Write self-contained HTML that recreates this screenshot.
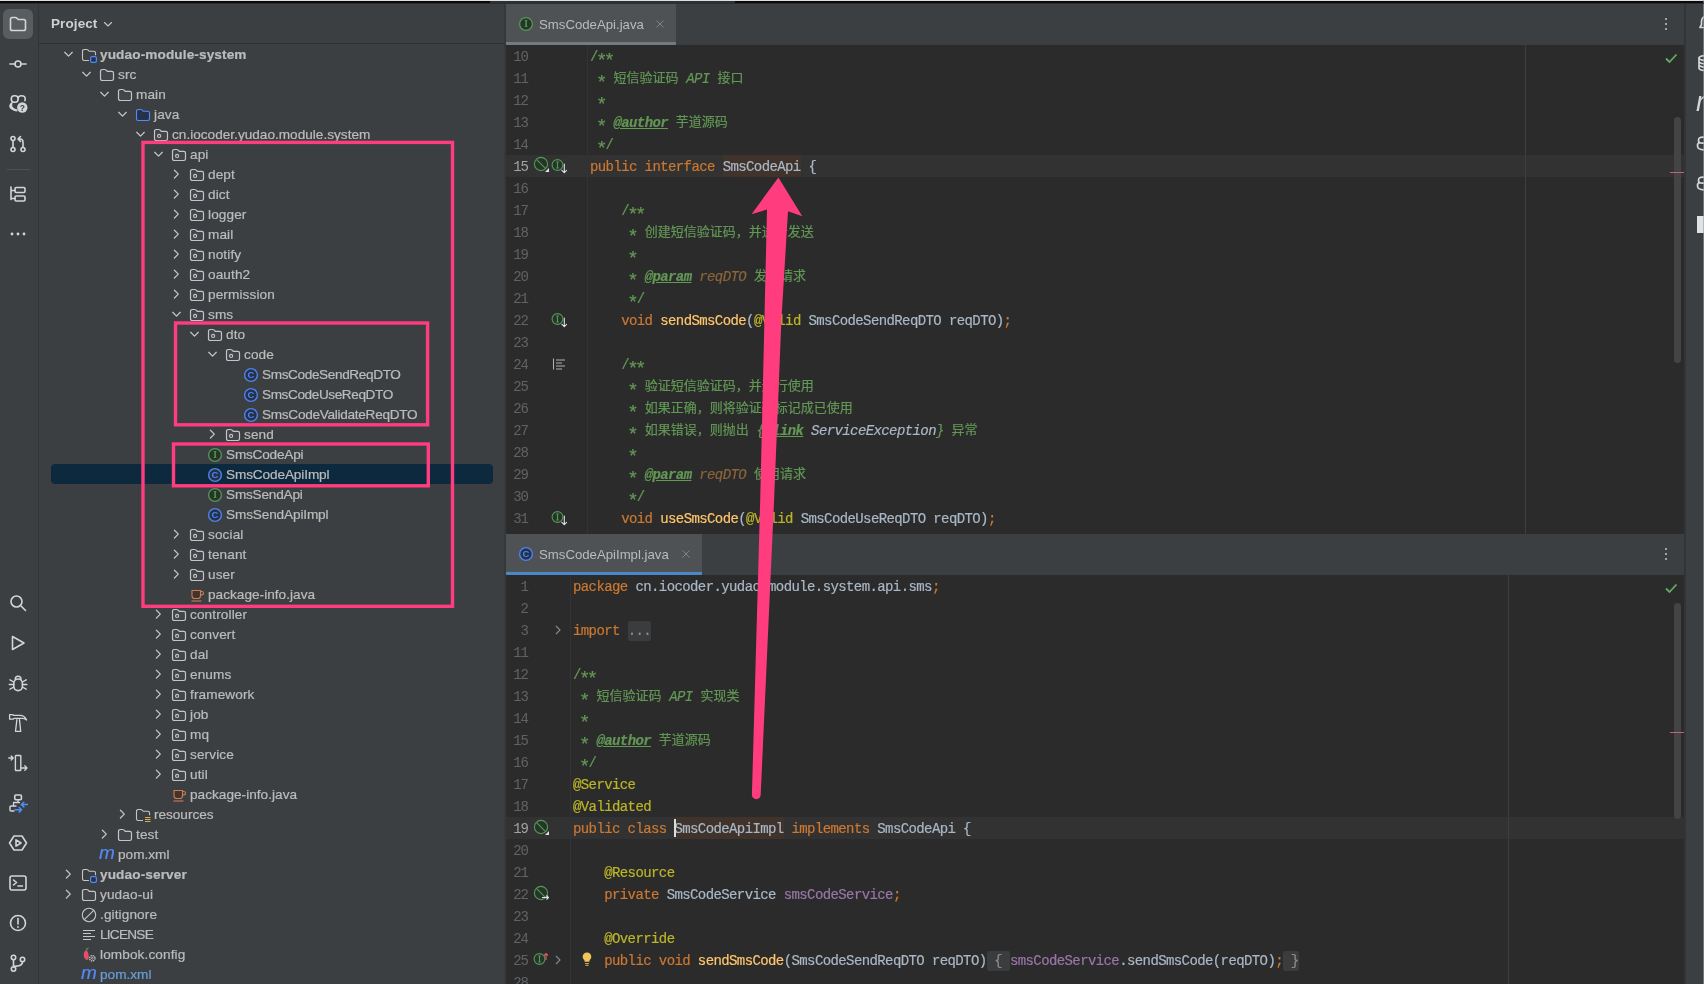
<!DOCTYPE html><html><head><meta charset="utf-8"><title>IDE</title><style>
*{box-sizing:border-box}
html,body{margin:0;padding:0}
body{width:1704px;height:984px;overflow:hidden;background:#3c3f41;position:relative;font-family:"Liberation Sans","Noto Sans CJK SC",sans-serif;color:#bbbbbb}
div{position:absolute}
#root{left:0;top:0;width:1704px;height:984px;will-change:transform}
.ti{width:16px;height:16px;line-height:0}
.tl{height:20px;line-height:20px;font-size:13.6px;color:#bbbbbb;-webkit-text-stroke:.22px;white-space:nowrap;letter-spacing:.12px;margin-top:1px}
.sel{left:51px;width:442px;height:20px;background:#0d293e;border-radius:4px}
.ed{background:#2b2b2b;overflow:hidden}
.ln{left:0;height:22px;text-align:right;font:14px/22px "Liberation Mono","Noto Sans CJK SC",monospace;letter-spacing:-1.3px;color:#606366}
.ln.cur{color:#a4a3a3}
.cl{height:22px;white-space:pre;font:14px/22px "Liberation Mono","Noto Sans CJK SC",monospace;letter-spacing:-.6px;color:#a9b7c6;-webkit-text-stroke:.2px}
.cj{font-size:13px;letter-spacing:0;position:relative;top:-.6px}
.as{display:inline-block;width:7.8px;height:10px;font-size:19px;line-height:10px;letter-spacing:0;position:relative;top:4.5px;text-indent:-1.8px;font-style:normal;overflow:visible}
.k{color:#cc7832}.d{color:#629755}.d i{font-style:italic}
.dt{color:#629755;font-weight:bold;font-style:italic;text-decoration:underline}
.dp{color:#8a653b;font-style:italic}.di{color:#a9b7c6;font-style:italic}
.a{color:#bbb529}.f{color:#ffc66d}.v{color:#9876aa}
.hl{background:#40332b;display:inline-block;height:21.5px;vertical-align:top;margin-top:-1px;padding-top:1px;box-sizing:border-box}
.fold{background:#3a3c3d;color:#8c8c8c;border-radius:2px;display:inline-block;height:20px;line-height:20px;vertical-align:top;margin-top:1px}
.tab{font-size:13.2px;color:#bbbbbb;white-space:nowrap;letter-spacing:0}
.pk{border:3px solid #ff3c7e}
</style></head><body><div id="root">
<div style="left:0;top:0;width:1704px;height:1.1px;background:#dedede"></div>
<div style="left:0;top:1.1px;width:1704px;height:1.6px;background:#0a0a0b"></div>
<div style="left:490px;top:1.1px;width:245px;height:1.6px;background:#2e3032"></div>
<div style="left:38px;top:3px;width:1px;height:981px;background:#323436"></div>
<div style="left:3px;top:9px;width:30px;height:30px;border-radius:6px;background:#5a5d60"></div>
<div style="left:8px;top:14px;width:20px;height:20px;line-height:0"><svg width="20" height="20" viewBox="0 0 20 20" fill="none" stroke="#d3d5d9" stroke-width="1.6" stroke-linecap="round" stroke-linejoin="round"><path d="M2.5 5.3c0-1 .8-1.8 1.8-1.8h3.1c.5 0 .9.2 1.3.5l1.5 1.5h5.5c1 0 1.8.8 1.8 1.8v7.4c0 1-.8 1.8-1.8 1.8H4.3c-1 0-1.8-.8-1.8-1.8z"/></svg></div>
<div style="left:8px;top:54px;width:20px;height:20px;line-height:0"><svg width="20" height="20" viewBox="0 0 20 20" fill="none" stroke="#d3d5d9" stroke-width="1.6" stroke-linecap="round" stroke-linejoin="round"><circle cx="10" cy="10" r="3"/><path d="M2 10h5M13 10h5"/></svg></div>
<div style="left:8px;top:94px;width:20px;height:20px;line-height:0"><svg width="20" height="20" viewBox="0 0 20 20" fill="none" stroke="#d3d5d9" stroke-width="1.6" stroke-linecap="round" stroke-linejoin="round"><rect x="3.300" y="1.800" width="6.800" height="6.400" rx="3"/><path d="M10.100 4.800c0-2 1.400-3 3.500-3 2.200 0 3.600 1.200 3.600 3.200 0 .6-.1 1.100-.3 1.600"/><path d="M4.300 7.800C1.200 9.800.4 12.400 2 14.200c1.700 1.800 4.800 3 7.300 3.400l.2-2c-2-.5-4.300-1.600-5-2.800-.5-1.200-.2-3.200.3-4.600z" fill="#d3d5d9" stroke="none"/><circle cx="14.300" cy="13.500" r="5.200" fill="#d3d5d9" stroke="none"/><text x="14.300" y="16.600" font-family="Liberation Sans,sans-serif" font-weight="bold" font-size="8.500" text-anchor="middle" fill="#3c3f41" stroke="none">?</text></svg></div>
<div style="left:8px;top:134px;width:20px;height:20px;line-height:0"><svg width="20" height="20" viewBox="0 0 20 20" fill="none" stroke="#d3d5d9" stroke-width="1.6" stroke-linecap="round" stroke-linejoin="round"><circle cx="5" cy="4.500" r="2"/><circle cx="5" cy="15.500" r="2"/><circle cx="15" cy="15.500" r="2"/><path d="M5 6.500v7M15 13.500V8c0-1.700-1.300-3-3-3h-1.500M12.500 2.500L10 5l2.500 2.500"/></svg></div>
<div style="left:7px;top:169px;width:23px;height:1px;background:#4e5157"></div>
<div style="left:8px;top:184px;width:20px;height:20px;line-height:0"><svg width="20" height="20" viewBox="0 0 20 20" fill="none" stroke="#d3d5d9" stroke-width="1.6" stroke-linecap="round" stroke-linejoin="round"><path d="M3 3v12.500M3 6.500h4M3 14.500h4"/><rect x="7" y="3.500" width="10" height="5" rx="1.200"/><rect x="7" y="12" width="10" height="5" rx="1.200"/></svg></div>
<div style="left:8px;top:224px;width:20px;height:20px;line-height:0"><svg width="20" height="20" viewBox="0 0 20 20" fill="none" stroke="#d3d5d9" stroke-width="1.6" stroke-linecap="round" stroke-linejoin="round"><circle cx="4" cy="10" r="1.400" fill="#d3d5d9" stroke="none"/><circle cx="10" cy="10" r="1.400" fill="#d3d5d9" stroke="none"/><circle cx="16" cy="10" r="1.400" fill="#d3d5d9" stroke="none"/></svg></div>
<div style="left:8px;top:593px;width:20px;height:20px;line-height:0"><svg width="20" height="20" viewBox="0 0 20 20" fill="none" stroke="#d3d5d9" stroke-width="1.6" stroke-linecap="round" stroke-linejoin="round"><circle cx="8.500" cy="8.500" r="5.500"/><path d="M12.800 12.800L17.500 17.500"/></svg></div>
<div style="left:8px;top:633px;width:20px;height:20px;line-height:0"><svg width="20" height="20" viewBox="0 0 20 20" fill="none" stroke="#d3d5d9" stroke-width="1.6" stroke-linecap="round" stroke-linejoin="round"><path d="M4.500 3.500v13l11.500-6.500z"/></svg></div>
<div style="left:8px;top:673px;width:20px;height:20px;line-height:0"><svg width="20" height="20" viewBox="0 0 20 20" fill="none" stroke="#d3d5d9" stroke-width="1.6" stroke-linecap="round" stroke-linejoin="round"><rect x="5.800" y="6" width="8.600" height="11.600" rx="4.300"/><path d="M7.200 6.200a2.900 2.900 0 0 1 5.800 0M1.300 11.500h4.500M14.400 11.500h4.500M2 6.800l3.800 2.200M18.200 6.800l-3.800 2.200M2 16.200l3.800-2.200M18.200 16.200l-3.800-2.200" stroke-width="1.400"/></svg></div>
<div style="left:8px;top:713px;width:20px;height:20px;line-height:0"><svg width="20" height="20" viewBox="0 0 20 20" fill="none" stroke="#d3d5d9" stroke-width="1.6" stroke-linecap="round" stroke-linejoin="round"><path d="M1.600 1.600h3l1 .8h6.500c3.200 0 5 1.500 6.500 4.600-1.500-1.100-3-1.600-4.500-1.600H6l-1 .8H1.600z" stroke-width="1.300"/><path d="M8.900 6.600L7.500 18.400h5.200L11.500 6.600" stroke-width="1.300"/></svg></div>
<div style="left:8px;top:753px;width:20px;height:20px;line-height:0"><svg width="20" height="20" viewBox="0 0 20 20" fill="none" stroke="#d3d5d9" stroke-width="1.6" stroke-linecap="round" stroke-linejoin="round"><rect x="7.400" y="2.500" width="5.400" height="15" rx=".6" stroke-width="1.400"/><path d="M.8 5h4.200M3.200 3l2 2-2 2M13.500 15h5.500M16.800 12.800L19 15l-2.200 2.200" stroke-width="1.300"/></svg></div>
<div style="left:8px;top:793px;width:20px;height:20px;line-height:0"><svg width="20" height="20" viewBox="0 0 20 20" fill="none" stroke="#d3d5d9" stroke-width="1.6" stroke-linecap="round" stroke-linejoin="round"><rect x="6.800" y="2" width="6.600" height="4.800" rx="1"/><path d="M10 6.800V9.500M5.500 12.500V9.500h6" stroke-width="1.300"/><path d="M8 13H3c-.6 0-1 .4-1 1v3c0 .6.400 1 1 1h3" stroke-width="1.400"/><path d="M13.500 11.600H20M15.800 9.300l-2.400 2.300 2.400 2.300" stroke="#4d8ef7" stroke-width="1.500"/><path d="M7 16.800h6.500M11.200 14.500l2.400 2.300-2.400 2.300" stroke="#4d8ef7" stroke-width="1.500"/></svg></div>
<div style="left:8px;top:833px;width:20px;height:20px;line-height:0"><svg width="20" height="20" viewBox="0 0 20 20" fill="none" stroke="#d3d5d9" stroke-width="1.6" stroke-linecap="round" stroke-linejoin="round"><path d="M6 3h8l4.500 7-4.500 7H6L1.500 10z"/><path d="M8 6.800v6.400l5-3.200z"/></svg></div>
<div style="left:8px;top:873px;width:20px;height:20px;line-height:0"><svg width="20" height="20" viewBox="0 0 20 20" fill="none" stroke="#d3d5d9" stroke-width="1.6" stroke-linecap="round" stroke-linejoin="round"><rect x="2" y="3" width="16" height="14" rx="2"/><path d="M5.500 7l3 2.500-3 2.500M10 13h4.500"/></svg></div>
<div style="left:8px;top:913px;width:20px;height:20px;line-height:0"><svg width="20" height="20" viewBox="0 0 20 20" fill="none" stroke="#d3d5d9" stroke-width="1.6" stroke-linecap="round" stroke-linejoin="round"><circle cx="10" cy="10" r="7.500"/><path d="M10 5.500v5.500"/><circle cx="10" cy="14" r=".9" fill="#d3d5d9" stroke="none"/></svg></div>
<div style="left:8px;top:953px;width:20px;height:20px;line-height:0"><svg width="20" height="20" viewBox="0 0 20 20" fill="none" stroke="#d3d5d9" stroke-width="1.6" stroke-linecap="round" stroke-linejoin="round"><circle cx="5.500" cy="4.500" r="2.200"/><circle cx="5.500" cy="16" r="2.200"/><circle cx="14.500" cy="6.500" r="2.200"/><path d="M5.500 6.700v7.100M14.500 8.700c0 3-2.500 4-5 4.300-2 .3-4 .5-4 1"/></svg></div>
<div style="left:51px;top:14px;font:bold 13.500px/20px 'Liberation Sans',sans-serif;color:#ced0d2;letter-spacing:.1px">Project</div>
<div class="ti" style="left:100px;top:16px"><svg width="16" height="16" viewBox="0 0 16 16" style="" fill="none"><path d="M4.500 6.500L8 10l3.500-3.500" stroke="#c3c5c7" stroke-width="1.100" stroke-linecap="round" stroke-linejoin="round"/></svg></div>
<div style="left:39px;top:43px;width:466px;height:1px;background:#2f3133"></div>
<div class="ti" style="left:60px;top:46px"><svg width="16" height="16" viewBox="0 0 16 16" style="" fill="none"><path d="M4.700 6.300l3.800 3.800 3.800-3.800" stroke="#c3c5c7" stroke-width="1.25" stroke-linecap="round" stroke-linejoin="round"/></svg></div>
<div class="ti" style="left:81px;top:46.5px"><svg width="16" height="16" viewBox="0 0 16 16" style="" fill="none"><path d="M1.5 4.2c0-.94.76-1.7 1.7-1.7h2.5c.4 0 .8.15 1.1.42L8.3 4.3h4.5c.94 0 1.7.76 1.7 1.7v2.2M8 13.5H3.2c-.94 0-1.7-.76-1.7-1.7V4.2" stroke="#c3c5c7" stroke-width="1.1" fill="none"/><rect x="9.6" y="9.6" width="5.8" height="5.8" rx="1.4" stroke="#548af7" stroke-width="1.2" fill="#25324d"/></svg></div>
<div class="tl" style="left:100px;top:44px;font-weight:bold;">yudao-module-system</div>
<div class="ti" style="left:78px;top:66px"><svg width="16" height="16" viewBox="0 0 16 16" style="" fill="none"><path d="M4.700 6.300l3.800 3.800 3.800-3.800" stroke="#c3c5c7" stroke-width="1.25" stroke-linecap="round" stroke-linejoin="round"/></svg></div>
<div class="ti" style="left:99px;top:66.5px"><svg width="16" height="16" viewBox="0 0 16 16" style="" fill="none"><path d="M1.5 4.2c0-.94.76-1.7 1.7-1.7h2.5c.4 0 .8.15 1.1.42L8.3 4.3h4.5c.94 0 1.7.76 1.7 1.7v5.8c0 .94-.76 1.7-1.7 1.7H3.2c-.94 0-1.7-.76-1.7-1.7z" stroke="#c3c5c7" stroke-width="1.2" fill="#43454a"/></svg></div>
<div class="tl" style="left:118px;top:64px;">src</div>
<div class="ti" style="left:96px;top:86px"><svg width="16" height="16" viewBox="0 0 16 16" style="" fill="none"><path d="M4.700 6.300l3.800 3.800 3.800-3.800" stroke="#c3c5c7" stroke-width="1.25" stroke-linecap="round" stroke-linejoin="round"/></svg></div>
<div class="ti" style="left:117px;top:86.5px"><svg width="16" height="16" viewBox="0 0 16 16" style="" fill="none"><path d="M1.5 4.2c0-.94.76-1.7 1.7-1.7h2.5c.4 0 .8.15 1.1.42L8.3 4.3h4.5c.94 0 1.7.76 1.7 1.7v5.8c0 .94-.76 1.7-1.7 1.7H3.2c-.94 0-1.7-.76-1.7-1.7z" stroke="#c3c5c7" stroke-width="1.2" fill="#43454a"/></svg></div>
<div class="tl" style="left:136px;top:84px;">main</div>
<div class="ti" style="left:114px;top:106px"><svg width="16" height="16" viewBox="0 0 16 16" style="" fill="none"><path d="M4.700 6.300l3.800 3.800 3.800-3.800" stroke="#c3c5c7" stroke-width="1.25" stroke-linecap="round" stroke-linejoin="round"/></svg></div>
<div class="ti" style="left:135px;top:106.5px"><svg width="16" height="16" viewBox="0 0 16 16" style="" fill="none"><path d="M1.5 4.2c0-.94.76-1.7 1.7-1.7h2.5c.4 0 .8.15 1.1.42L8.3 4.3h4.5c.94 0 1.7.76 1.7 1.7v5.8c0 .94-.76 1.7-1.7 1.7H3.2c-.94 0-1.7-.76-1.7-1.7z" stroke="#548af7" stroke-width="1.1" fill="#25324d"/></svg></div>
<div class="tl" style="left:154px;top:104px;">java</div>
<div class="ti" style="left:132px;top:126px"><svg width="16" height="16" viewBox="0 0 16 16" style="" fill="none"><path d="M4.700 6.300l3.800 3.800 3.800-3.800" stroke="#c3c5c7" stroke-width="1.25" stroke-linecap="round" stroke-linejoin="round"/></svg></div>
<div class="ti" style="left:153px;top:126.5px"><svg width="16" height="16" viewBox="0 0 16 16" style="" fill="none"><path d="M1.5 4.2c0-.94.76-1.7 1.7-1.7h2.5c.4 0 .8.15 1.1.42L8.3 4.3h4.5c.94 0 1.7.76 1.7 1.7v5.8c0 .94-.76 1.7-1.7 1.7H3.2c-.94 0-1.7-.76-1.7-1.7z" stroke="#c3c5c7" stroke-width="1.2" fill="#43454a"/><circle cx="6.100" cy="8.900" r="1.550" stroke="#c3c5c7" stroke-width="1.150"/></svg></div>
<div class="tl" style="left:172px;top:124px;letter-spacing:0.013px;">cn.iocoder.yudao.module.system</div>
<div class="ti" style="left:150px;top:146px"><svg width="16" height="16" viewBox="0 0 16 16" style="" fill="none"><path d="M4.700 6.300l3.800 3.800 3.800-3.800" stroke="#c3c5c7" stroke-width="1.25" stroke-linecap="round" stroke-linejoin="round"/></svg></div>
<div class="ti" style="left:171px;top:146.5px"><svg width="16" height="16" viewBox="0 0 16 16" style="" fill="none"><path d="M1.5 4.2c0-.94.76-1.7 1.7-1.7h2.5c.4 0 .8.15 1.1.42L8.3 4.3h4.5c.94 0 1.7.76 1.7 1.7v5.8c0 .94-.76 1.7-1.7 1.7H3.2c-.94 0-1.7-.76-1.7-1.7z" stroke="#c3c5c7" stroke-width="1.2" fill="#43454a"/><circle cx="6.100" cy="8.900" r="1.550" stroke="#c3c5c7" stroke-width="1.150"/></svg></div>
<div class="tl" style="left:190px;top:144px;">api</div>
<div class="ti" style="left:168px;top:166px"><svg width="16" height="16" viewBox="0 0 16 16" style="" fill="none"><path d="M6.400 4.200l3.900 3.900-3.900 3.900" stroke="#c3c5c7" stroke-width="1.25" stroke-linecap="round" stroke-linejoin="round"/></svg></div>
<div class="ti" style="left:189px;top:166.5px"><svg width="16" height="16" viewBox="0 0 16 16" style="" fill="none"><path d="M1.5 4.2c0-.94.76-1.7 1.7-1.7h2.5c.4 0 .8.15 1.1.42L8.3 4.3h4.5c.94 0 1.7.76 1.7 1.7v5.8c0 .94-.76 1.7-1.7 1.7H3.2c-.94 0-1.7-.76-1.7-1.7z" stroke="#c3c5c7" stroke-width="1.2" fill="#43454a"/><circle cx="6.100" cy="8.900" r="1.550" stroke="#c3c5c7" stroke-width="1.150"/></svg></div>
<div class="tl" style="left:208px;top:164px;">dept</div>
<div class="ti" style="left:168px;top:186px"><svg width="16" height="16" viewBox="0 0 16 16" style="" fill="none"><path d="M6.400 4.200l3.900 3.900-3.900 3.900" stroke="#c3c5c7" stroke-width="1.25" stroke-linecap="round" stroke-linejoin="round"/></svg></div>
<div class="ti" style="left:189px;top:186.5px"><svg width="16" height="16" viewBox="0 0 16 16" style="" fill="none"><path d="M1.5 4.2c0-.94.76-1.7 1.7-1.7h2.5c.4 0 .8.15 1.1.42L8.3 4.3h4.5c.94 0 1.7.76 1.7 1.7v5.8c0 .94-.76 1.7-1.7 1.7H3.2c-.94 0-1.7-.76-1.7-1.7z" stroke="#c3c5c7" stroke-width="1.2" fill="#43454a"/><circle cx="6.100" cy="8.900" r="1.550" stroke="#c3c5c7" stroke-width="1.150"/></svg></div>
<div class="tl" style="left:208px;top:184px;">dict</div>
<div class="ti" style="left:168px;top:206px"><svg width="16" height="16" viewBox="0 0 16 16" style="" fill="none"><path d="M6.400 4.200l3.900 3.900-3.900 3.900" stroke="#c3c5c7" stroke-width="1.25" stroke-linecap="round" stroke-linejoin="round"/></svg></div>
<div class="ti" style="left:189px;top:206.5px"><svg width="16" height="16" viewBox="0 0 16 16" style="" fill="none"><path d="M1.5 4.2c0-.94.76-1.7 1.7-1.7h2.5c.4 0 .8.15 1.1.42L8.3 4.3h4.5c.94 0 1.7.76 1.7 1.7v5.8c0 .94-.76 1.7-1.7 1.7H3.2c-.94 0-1.7-.76-1.7-1.7z" stroke="#c3c5c7" stroke-width="1.2" fill="#43454a"/><circle cx="6.100" cy="8.900" r="1.550" stroke="#c3c5c7" stroke-width="1.150"/></svg></div>
<div class="tl" style="left:208px;top:204px;">logger</div>
<div class="ti" style="left:168px;top:226px"><svg width="16" height="16" viewBox="0 0 16 16" style="" fill="none"><path d="M6.400 4.200l3.900 3.900-3.900 3.900" stroke="#c3c5c7" stroke-width="1.25" stroke-linecap="round" stroke-linejoin="round"/></svg></div>
<div class="ti" style="left:189px;top:226.5px"><svg width="16" height="16" viewBox="0 0 16 16" style="" fill="none"><path d="M1.5 4.2c0-.94.76-1.7 1.7-1.7h2.5c.4 0 .8.15 1.1.42L8.3 4.3h4.5c.94 0 1.7.76 1.7 1.7v5.8c0 .94-.76 1.7-1.7 1.7H3.2c-.94 0-1.7-.76-1.7-1.7z" stroke="#c3c5c7" stroke-width="1.2" fill="#43454a"/><circle cx="6.100" cy="8.900" r="1.550" stroke="#c3c5c7" stroke-width="1.150"/></svg></div>
<div class="tl" style="left:208px;top:224px;">mail</div>
<div class="ti" style="left:168px;top:246px"><svg width="16" height="16" viewBox="0 0 16 16" style="" fill="none"><path d="M6.400 4.200l3.900 3.900-3.900 3.900" stroke="#c3c5c7" stroke-width="1.25" stroke-linecap="round" stroke-linejoin="round"/></svg></div>
<div class="ti" style="left:189px;top:246.5px"><svg width="16" height="16" viewBox="0 0 16 16" style="" fill="none"><path d="M1.5 4.2c0-.94.76-1.7 1.7-1.7h2.5c.4 0 .8.15 1.1.42L8.3 4.3h4.5c.94 0 1.7.76 1.7 1.7v5.8c0 .94-.76 1.7-1.7 1.7H3.2c-.94 0-1.7-.76-1.7-1.7z" stroke="#c3c5c7" stroke-width="1.2" fill="#43454a"/><circle cx="6.100" cy="8.900" r="1.550" stroke="#c3c5c7" stroke-width="1.150"/></svg></div>
<div class="tl" style="left:208px;top:244px;">notify</div>
<div class="ti" style="left:168px;top:266px"><svg width="16" height="16" viewBox="0 0 16 16" style="" fill="none"><path d="M6.400 4.200l3.900 3.900-3.900 3.900" stroke="#c3c5c7" stroke-width="1.25" stroke-linecap="round" stroke-linejoin="round"/></svg></div>
<div class="ti" style="left:189px;top:266.5px"><svg width="16" height="16" viewBox="0 0 16 16" style="" fill="none"><path d="M1.5 4.2c0-.94.76-1.7 1.7-1.7h2.5c.4 0 .8.15 1.1.42L8.3 4.3h4.5c.94 0 1.7.76 1.7 1.7v5.8c0 .94-.76 1.7-1.7 1.7H3.2c-.94 0-1.7-.76-1.7-1.7z" stroke="#c3c5c7" stroke-width="1.2" fill="#43454a"/><circle cx="6.100" cy="8.900" r="1.550" stroke="#c3c5c7" stroke-width="1.150"/></svg></div>
<div class="tl" style="left:208px;top:264px;">oauth2</div>
<div class="ti" style="left:168px;top:286px"><svg width="16" height="16" viewBox="0 0 16 16" style="" fill="none"><path d="M6.400 4.200l3.900 3.900-3.900 3.900" stroke="#c3c5c7" stroke-width="1.25" stroke-linecap="round" stroke-linejoin="round"/></svg></div>
<div class="ti" style="left:189px;top:286.5px"><svg width="16" height="16" viewBox="0 0 16 16" style="" fill="none"><path d="M1.5 4.2c0-.94.76-1.7 1.7-1.7h2.5c.4 0 .8.15 1.1.42L8.3 4.3h4.5c.94 0 1.7.76 1.7 1.7v5.8c0 .94-.76 1.7-1.7 1.7H3.2c-.94 0-1.7-.76-1.7-1.7z" stroke="#c3c5c7" stroke-width="1.2" fill="#43454a"/><circle cx="6.100" cy="8.900" r="1.550" stroke="#c3c5c7" stroke-width="1.150"/></svg></div>
<div class="tl" style="left:208px;top:284px;">permission</div>
<div class="ti" style="left:168px;top:306px"><svg width="16" height="16" viewBox="0 0 16 16" style="" fill="none"><path d="M4.700 6.300l3.800 3.800 3.800-3.800" stroke="#c3c5c7" stroke-width="1.25" stroke-linecap="round" stroke-linejoin="round"/></svg></div>
<div class="ti" style="left:189px;top:306.5px"><svg width="16" height="16" viewBox="0 0 16 16" style="" fill="none"><path d="M1.5 4.2c0-.94.76-1.7 1.7-1.7h2.5c.4 0 .8.15 1.1.42L8.3 4.3h4.5c.94 0 1.7.76 1.7 1.7v5.8c0 .94-.76 1.7-1.7 1.7H3.2c-.94 0-1.7-.76-1.7-1.7z" stroke="#c3c5c7" stroke-width="1.2" fill="#43454a"/><circle cx="6.100" cy="8.900" r="1.550" stroke="#c3c5c7" stroke-width="1.150"/></svg></div>
<div class="tl" style="left:208px;top:304px;">sms</div>
<div class="ti" style="left:186px;top:326px"><svg width="16" height="16" viewBox="0 0 16 16" style="" fill="none"><path d="M4.700 6.300l3.800 3.800 3.800-3.800" stroke="#c3c5c7" stroke-width="1.25" stroke-linecap="round" stroke-linejoin="round"/></svg></div>
<div class="ti" style="left:207px;top:326.5px"><svg width="16" height="16" viewBox="0 0 16 16" style="" fill="none"><path d="M1.5 4.2c0-.94.76-1.7 1.7-1.7h2.5c.4 0 .8.15 1.1.42L8.3 4.3h4.5c.94 0 1.7.76 1.7 1.7v5.8c0 .94-.76 1.7-1.7 1.7H3.2c-.94 0-1.7-.76-1.7-1.7z" stroke="#c3c5c7" stroke-width="1.2" fill="#43454a"/><circle cx="6.100" cy="8.900" r="1.550" stroke="#c3c5c7" stroke-width="1.150"/></svg></div>
<div class="tl" style="left:226px;top:324px;">dto</div>
<div class="ti" style="left:204px;top:346px"><svg width="16" height="16" viewBox="0 0 16 16" style="" fill="none"><path d="M4.700 6.300l3.800 3.800 3.800-3.800" stroke="#c3c5c7" stroke-width="1.25" stroke-linecap="round" stroke-linejoin="round"/></svg></div>
<div class="ti" style="left:225px;top:346.5px"><svg width="16" height="16" viewBox="0 0 16 16" style="" fill="none"><path d="M1.5 4.2c0-.94.76-1.7 1.7-1.7h2.5c.4 0 .8.15 1.1.42L8.3 4.3h4.5c.94 0 1.7.76 1.7 1.7v5.8c0 .94-.76 1.7-1.7 1.7H3.2c-.94 0-1.7-.76-1.7-1.7z" stroke="#c3c5c7" stroke-width="1.2" fill="#43454a"/><circle cx="6.100" cy="8.900" r="1.550" stroke="#c3c5c7" stroke-width="1.150"/></svg></div>
<div class="tl" style="left:244px;top:344px;">code</div>
<div class="ti" style="left:243px;top:366.5px"><svg width="16" height="16" viewBox="0 0 16 16" style="" fill="none"><circle cx="8" cy="8" r="6.4" stroke="#4f84ea" stroke-width="1.4" fill="#25324d"/><text x="8" y="11.3" font-family="Liberation Sans,sans-serif" font-size="9.5" font-weight="bold" text-anchor="middle" fill="#4f84ea">C</text></svg></div>
<div class="tl" style="left:262px;top:364px;letter-spacing:-0.370px;">SmsCodeSendReqDTO</div>
<div class="ti" style="left:243px;top:386.5px"><svg width="16" height="16" viewBox="0 0 16 16" style="" fill="none"><circle cx="8" cy="8" r="6.4" stroke="#4f84ea" stroke-width="1.4" fill="#25324d"/><text x="8" y="11.3" font-family="Liberation Sans,sans-serif" font-size="9.5" font-weight="bold" text-anchor="middle" fill="#4f84ea">C</text></svg></div>
<div class="tl" style="left:262px;top:384px;letter-spacing:-0.400px;">SmsCodeUseReqDTO</div>
<div class="ti" style="left:243px;top:406.5px"><svg width="16" height="16" viewBox="0 0 16 16" style="" fill="none"><circle cx="8" cy="8" r="6.4" stroke="#4f84ea" stroke-width="1.4" fill="#25324d"/><text x="8" y="11.3" font-family="Liberation Sans,sans-serif" font-size="9.5" font-weight="bold" text-anchor="middle" fill="#4f84ea">C</text></svg></div>
<div class="tl" style="left:262px;top:404px;letter-spacing:-0.280px;">SmsCodeValidateReqDTO</div>
<div class="ti" style="left:204px;top:426px"><svg width="16" height="16" viewBox="0 0 16 16" style="" fill="none"><path d="M6.400 4.200l3.900 3.900-3.900 3.900" stroke="#c3c5c7" stroke-width="1.25" stroke-linecap="round" stroke-linejoin="round"/></svg></div>
<div class="ti" style="left:225px;top:426.5px"><svg width="16" height="16" viewBox="0 0 16 16" style="" fill="none"><path d="M1.5 4.2c0-.94.76-1.7 1.7-1.7h2.5c.4 0 .8.15 1.1.42L8.3 4.3h4.5c.94 0 1.7.76 1.7 1.7v5.8c0 .94-.76 1.7-1.7 1.7H3.2c-.94 0-1.7-.76-1.7-1.7z" stroke="#c3c5c7" stroke-width="1.2" fill="#43454a"/><circle cx="6.100" cy="8.900" r="1.550" stroke="#c3c5c7" stroke-width="1.150"/></svg></div>
<div class="tl" style="left:244px;top:424px;">send</div>
<div class="ti" style="left:207px;top:446.5px"><svg width="16" height="16" viewBox="0 0 16 16" style="" fill="none"><circle cx="8" cy="8" r="6.4" stroke="#57965c" stroke-width="1.3" fill="#253627"/><text x="8" y="11.3" font-family="Liberation Serif,serif" font-size="9.5" font-weight="bold" text-anchor="middle" fill="#57965c">I</text></svg></div>
<div class="tl" style="left:226px;top:444px;letter-spacing:-0.190px;">SmsCodeApi</div>
<div class="sel" style="top:464px"></div>
<div class="ti" style="left:207px;top:466.5px"><svg width="16" height="16" viewBox="0 0 16 16" style="" fill="none"><circle cx="8" cy="8" r="6.4" stroke="#4f84ea" stroke-width="1.4" fill="#25324d"/><text x="8" y="11.3" font-family="Liberation Sans,sans-serif" font-size="9.5" font-weight="bold" text-anchor="middle" fill="#4f84ea">C</text></svg></div>
<div class="tl" style="left:226px;top:464px;letter-spacing:-0.110px;">SmsCodeApiImpl</div>
<div class="ti" style="left:207px;top:486.5px"><svg width="16" height="16" viewBox="0 0 16 16" style="" fill="none"><circle cx="8" cy="8" r="6.4" stroke="#57965c" stroke-width="1.3" fill="#253627"/><text x="8" y="11.3" font-family="Liberation Serif,serif" font-size="9.5" font-weight="bold" text-anchor="middle" fill="#57965c">I</text></svg></div>
<div class="tl" style="left:226px;top:484px;letter-spacing:-0.190px;">SmsSendApi</div>
<div class="ti" style="left:207px;top:506.5px"><svg width="16" height="16" viewBox="0 0 16 16" style="" fill="none"><circle cx="8" cy="8" r="6.4" stroke="#4f84ea" stroke-width="1.4" fill="#25324d"/><text x="8" y="11.3" font-family="Liberation Sans,sans-serif" font-size="9.5" font-weight="bold" text-anchor="middle" fill="#4f84ea">C</text></svg></div>
<div class="tl" style="left:226px;top:504px;letter-spacing:-0.130px;">SmsSendApiImpl</div>
<div class="ti" style="left:168px;top:526px"><svg width="16" height="16" viewBox="0 0 16 16" style="" fill="none"><path d="M6.400 4.200l3.900 3.900-3.900 3.900" stroke="#c3c5c7" stroke-width="1.25" stroke-linecap="round" stroke-linejoin="round"/></svg></div>
<div class="ti" style="left:189px;top:526.5px"><svg width="16" height="16" viewBox="0 0 16 16" style="" fill="none"><path d="M1.5 4.2c0-.94.76-1.7 1.7-1.7h2.5c.4 0 .8.15 1.1.42L8.3 4.3h4.5c.94 0 1.7.76 1.7 1.7v5.8c0 .94-.76 1.7-1.7 1.7H3.2c-.94 0-1.7-.76-1.7-1.7z" stroke="#c3c5c7" stroke-width="1.2" fill="#43454a"/><circle cx="6.100" cy="8.900" r="1.550" stroke="#c3c5c7" stroke-width="1.150"/></svg></div>
<div class="tl" style="left:208px;top:524px;">social</div>
<div class="ti" style="left:168px;top:546px"><svg width="16" height="16" viewBox="0 0 16 16" style="" fill="none"><path d="M6.400 4.200l3.900 3.900-3.900 3.900" stroke="#c3c5c7" stroke-width="1.25" stroke-linecap="round" stroke-linejoin="round"/></svg></div>
<div class="ti" style="left:189px;top:546.5px"><svg width="16" height="16" viewBox="0 0 16 16" style="" fill="none"><path d="M1.5 4.2c0-.94.76-1.7 1.7-1.7h2.5c.4 0 .8.15 1.1.42L8.3 4.3h4.5c.94 0 1.7.76 1.7 1.7v5.8c0 .94-.76 1.7-1.7 1.7H3.2c-.94 0-1.7-.76-1.7-1.7z" stroke="#c3c5c7" stroke-width="1.2" fill="#43454a"/><circle cx="6.100" cy="8.900" r="1.550" stroke="#c3c5c7" stroke-width="1.150"/></svg></div>
<div class="tl" style="left:208px;top:544px;">tenant</div>
<div class="ti" style="left:168px;top:566px"><svg width="16" height="16" viewBox="0 0 16 16" style="" fill="none"><path d="M6.400 4.200l3.900 3.900-3.900 3.900" stroke="#c3c5c7" stroke-width="1.25" stroke-linecap="round" stroke-linejoin="round"/></svg></div>
<div class="ti" style="left:189px;top:566.5px"><svg width="16" height="16" viewBox="0 0 16 16" style="" fill="none"><path d="M1.5 4.2c0-.94.76-1.7 1.7-1.7h2.5c.4 0 .8.15 1.1.42L8.3 4.3h4.5c.94 0 1.7.76 1.7 1.7v5.8c0 .94-.76 1.7-1.7 1.7H3.2c-.94 0-1.7-.76-1.7-1.7z" stroke="#c3c5c7" stroke-width="1.2" fill="#43454a"/><circle cx="6.100" cy="8.900" r="1.550" stroke="#c3c5c7" stroke-width="1.150"/></svg></div>
<div class="tl" style="left:208px;top:564px;">user</div>
<div class="ti" style="left:189px;top:586.5px"><svg width="16" height="16" viewBox="0 0 16 16" style="" fill="none"><path d="M3 3.5h8.5v5.2c0 1.55-1.25 2.8-2.8 2.8H5.8C4.25 11.5 3 10.25 3 8.7z" stroke="#c77d55" stroke-width="1.1" fill="#45322b"/><path d="M11.5 4.5h1.3c.95 0 1.7.75 1.7 1.7s-.75 1.7-1.7 1.7h-1.3" stroke="#c77d55" stroke-width="1.1"/><path d="M2.5 14h10" stroke="#c77d55" stroke-width="1.1"/></svg></div>
<div class="tl" style="left:208px;top:584px;letter-spacing:0.030px;">package-info.java</div>
<div class="ti" style="left:150px;top:606px"><svg width="16" height="16" viewBox="0 0 16 16" style="" fill="none"><path d="M6.400 4.200l3.900 3.900-3.900 3.900" stroke="#c3c5c7" stroke-width="1.25" stroke-linecap="round" stroke-linejoin="round"/></svg></div>
<div class="ti" style="left:171px;top:606.5px"><svg width="16" height="16" viewBox="0 0 16 16" style="" fill="none"><path d="M1.5 4.2c0-.94.76-1.7 1.7-1.7h2.5c.4 0 .8.15 1.1.42L8.3 4.3h4.5c.94 0 1.7.76 1.7 1.7v5.8c0 .94-.76 1.7-1.7 1.7H3.2c-.94 0-1.7-.76-1.7-1.7z" stroke="#c3c5c7" stroke-width="1.2" fill="#43454a"/><circle cx="6.100" cy="8.900" r="1.550" stroke="#c3c5c7" stroke-width="1.150"/></svg></div>
<div class="tl" style="left:190px;top:604px;">controller</div>
<div class="ti" style="left:150px;top:626px"><svg width="16" height="16" viewBox="0 0 16 16" style="" fill="none"><path d="M6.400 4.200l3.900 3.900-3.900 3.900" stroke="#c3c5c7" stroke-width="1.25" stroke-linecap="round" stroke-linejoin="round"/></svg></div>
<div class="ti" style="left:171px;top:626.5px"><svg width="16" height="16" viewBox="0 0 16 16" style="" fill="none"><path d="M1.5 4.2c0-.94.76-1.7 1.7-1.7h2.5c.4 0 .8.15 1.1.42L8.3 4.3h4.5c.94 0 1.7.76 1.7 1.7v5.8c0 .94-.76 1.7-1.7 1.7H3.2c-.94 0-1.7-.76-1.7-1.7z" stroke="#c3c5c7" stroke-width="1.2" fill="#43454a"/><circle cx="6.100" cy="8.900" r="1.550" stroke="#c3c5c7" stroke-width="1.150"/></svg></div>
<div class="tl" style="left:190px;top:624px;">convert</div>
<div class="ti" style="left:150px;top:646px"><svg width="16" height="16" viewBox="0 0 16 16" style="" fill="none"><path d="M6.400 4.200l3.900 3.900-3.900 3.900" stroke="#c3c5c7" stroke-width="1.25" stroke-linecap="round" stroke-linejoin="round"/></svg></div>
<div class="ti" style="left:171px;top:646.5px"><svg width="16" height="16" viewBox="0 0 16 16" style="" fill="none"><path d="M1.5 4.2c0-.94.76-1.7 1.7-1.7h2.5c.4 0 .8.15 1.1.42L8.3 4.3h4.5c.94 0 1.7.76 1.7 1.7v5.8c0 .94-.76 1.7-1.7 1.7H3.2c-.94 0-1.7-.76-1.7-1.7z" stroke="#c3c5c7" stroke-width="1.2" fill="#43454a"/><circle cx="6.100" cy="8.900" r="1.550" stroke="#c3c5c7" stroke-width="1.150"/></svg></div>
<div class="tl" style="left:190px;top:644px;">dal</div>
<div class="ti" style="left:150px;top:666px"><svg width="16" height="16" viewBox="0 0 16 16" style="" fill="none"><path d="M6.400 4.200l3.900 3.900-3.900 3.900" stroke="#c3c5c7" stroke-width="1.25" stroke-linecap="round" stroke-linejoin="round"/></svg></div>
<div class="ti" style="left:171px;top:666.5px"><svg width="16" height="16" viewBox="0 0 16 16" style="" fill="none"><path d="M1.5 4.2c0-.94.76-1.7 1.7-1.7h2.5c.4 0 .8.15 1.1.42L8.3 4.3h4.5c.94 0 1.7.76 1.7 1.7v5.8c0 .94-.76 1.7-1.7 1.7H3.2c-.94 0-1.7-.76-1.7-1.7z" stroke="#c3c5c7" stroke-width="1.2" fill="#43454a"/><circle cx="6.100" cy="8.900" r="1.550" stroke="#c3c5c7" stroke-width="1.150"/></svg></div>
<div class="tl" style="left:190px;top:664px;">enums</div>
<div class="ti" style="left:150px;top:686px"><svg width="16" height="16" viewBox="0 0 16 16" style="" fill="none"><path d="M6.400 4.200l3.900 3.900-3.900 3.900" stroke="#c3c5c7" stroke-width="1.25" stroke-linecap="round" stroke-linejoin="round"/></svg></div>
<div class="ti" style="left:171px;top:686.5px"><svg width="16" height="16" viewBox="0 0 16 16" style="" fill="none"><path d="M1.5 4.2c0-.94.76-1.7 1.7-1.7h2.5c.4 0 .8.15 1.1.42L8.3 4.3h4.5c.94 0 1.7.76 1.7 1.7v5.8c0 .94-.76 1.7-1.7 1.7H3.2c-.94 0-1.7-.76-1.7-1.7z" stroke="#c3c5c7" stroke-width="1.2" fill="#43454a"/><circle cx="6.100" cy="8.900" r="1.550" stroke="#c3c5c7" stroke-width="1.150"/></svg></div>
<div class="tl" style="left:190px;top:684px;">framework</div>
<div class="ti" style="left:150px;top:706px"><svg width="16" height="16" viewBox="0 0 16 16" style="" fill="none"><path d="M6.400 4.200l3.900 3.900-3.900 3.900" stroke="#c3c5c7" stroke-width="1.25" stroke-linecap="round" stroke-linejoin="round"/></svg></div>
<div class="ti" style="left:171px;top:706.5px"><svg width="16" height="16" viewBox="0 0 16 16" style="" fill="none"><path d="M1.5 4.2c0-.94.76-1.7 1.7-1.7h2.5c.4 0 .8.15 1.1.42L8.3 4.3h4.5c.94 0 1.7.76 1.7 1.7v5.8c0 .94-.76 1.7-1.7 1.7H3.2c-.94 0-1.7-.76-1.7-1.7z" stroke="#c3c5c7" stroke-width="1.2" fill="#43454a"/><circle cx="6.100" cy="8.900" r="1.550" stroke="#c3c5c7" stroke-width="1.150"/></svg></div>
<div class="tl" style="left:190px;top:704px;">job</div>
<div class="ti" style="left:150px;top:726px"><svg width="16" height="16" viewBox="0 0 16 16" style="" fill="none"><path d="M6.400 4.200l3.900 3.900-3.900 3.900" stroke="#c3c5c7" stroke-width="1.25" stroke-linecap="round" stroke-linejoin="round"/></svg></div>
<div class="ti" style="left:171px;top:726.5px"><svg width="16" height="16" viewBox="0 0 16 16" style="" fill="none"><path d="M1.5 4.2c0-.94.76-1.7 1.7-1.7h2.5c.4 0 .8.15 1.1.42L8.3 4.3h4.5c.94 0 1.7.76 1.7 1.7v5.8c0 .94-.76 1.7-1.7 1.7H3.2c-.94 0-1.7-.76-1.7-1.7z" stroke="#c3c5c7" stroke-width="1.2" fill="#43454a"/><circle cx="6.100" cy="8.900" r="1.550" stroke="#c3c5c7" stroke-width="1.150"/></svg></div>
<div class="tl" style="left:190px;top:724px;">mq</div>
<div class="ti" style="left:150px;top:746px"><svg width="16" height="16" viewBox="0 0 16 16" style="" fill="none"><path d="M6.400 4.200l3.900 3.900-3.900 3.900" stroke="#c3c5c7" stroke-width="1.25" stroke-linecap="round" stroke-linejoin="round"/></svg></div>
<div class="ti" style="left:171px;top:746.5px"><svg width="16" height="16" viewBox="0 0 16 16" style="" fill="none"><path d="M1.5 4.2c0-.94.76-1.7 1.7-1.7h2.5c.4 0 .8.15 1.1.42L8.3 4.3h4.5c.94 0 1.7.76 1.7 1.7v5.8c0 .94-.76 1.7-1.7 1.7H3.2c-.94 0-1.7-.76-1.7-1.7z" stroke="#c3c5c7" stroke-width="1.2" fill="#43454a"/><circle cx="6.100" cy="8.900" r="1.550" stroke="#c3c5c7" stroke-width="1.150"/></svg></div>
<div class="tl" style="left:190px;top:744px;">service</div>
<div class="ti" style="left:150px;top:766px"><svg width="16" height="16" viewBox="0 0 16 16" style="" fill="none"><path d="M6.400 4.200l3.900 3.900-3.900 3.900" stroke="#c3c5c7" stroke-width="1.25" stroke-linecap="round" stroke-linejoin="round"/></svg></div>
<div class="ti" style="left:171px;top:766.5px"><svg width="16" height="16" viewBox="0 0 16 16" style="" fill="none"><path d="M1.5 4.2c0-.94.76-1.7 1.7-1.7h2.5c.4 0 .8.15 1.1.42L8.3 4.3h4.5c.94 0 1.7.76 1.7 1.7v5.8c0 .94-.76 1.7-1.7 1.7H3.2c-.94 0-1.7-.76-1.7-1.7z" stroke="#c3c5c7" stroke-width="1.2" fill="#43454a"/><circle cx="6.100" cy="8.900" r="1.550" stroke="#c3c5c7" stroke-width="1.150"/></svg></div>
<div class="tl" style="left:190px;top:764px;">util</div>
<div class="ti" style="left:171px;top:786.5px"><svg width="16" height="16" viewBox="0 0 16 16" style="" fill="none"><path d="M3 3.5h8.5v5.2c0 1.55-1.25 2.8-2.8 2.8H5.8C4.25 11.5 3 10.25 3 8.7z" stroke="#c77d55" stroke-width="1.1" fill="#45322b"/><path d="M11.5 4.5h1.3c.95 0 1.7.75 1.7 1.7s-.75 1.7-1.7 1.7h-1.3" stroke="#c77d55" stroke-width="1.1"/><path d="M2.5 14h10" stroke="#c77d55" stroke-width="1.1"/></svg></div>
<div class="tl" style="left:190px;top:784px;letter-spacing:0.030px;">package-info.java</div>
<div class="ti" style="left:114px;top:806px"><svg width="16" height="16" viewBox="0 0 16 16" style="" fill="none"><path d="M6.400 4.200l3.900 3.900-3.900 3.900" stroke="#c3c5c7" stroke-width="1.25" stroke-linecap="round" stroke-linejoin="round"/></svg></div>
<div class="ti" style="left:135px;top:806.5px"><svg width="16" height="16" viewBox="0 0 16 16" style="" fill="none"><path d="M1.5 4.2c0-.94.76-1.7 1.7-1.7h2.5c.4 0 .8.15 1.1.42L8.3 4.3h4.5c.94 0 1.7.76 1.7 1.7v2.2M8 13.5H3.2c-.94 0-1.7-.76-1.7-1.7V4.2" stroke="#c3c5c7" stroke-width="1.1" fill="none"/><path d="M10 10.5h5.5M10 12.5h5.5M10 14.5h5.5" stroke="#d6ae58" stroke-width="1.1"/></svg></div>
<div class="tl" style="left:154px;top:804px;letter-spacing:-0.020px;">resources</div>
<div class="ti" style="left:96px;top:826px"><svg width="16" height="16" viewBox="0 0 16 16" style="" fill="none"><path d="M6.400 4.200l3.900 3.900-3.900 3.900" stroke="#c3c5c7" stroke-width="1.25" stroke-linecap="round" stroke-linejoin="round"/></svg></div>
<div class="ti" style="left:117px;top:826.5px"><svg width="16" height="16" viewBox="0 0 16 16" style="" fill="none"><path d="M1.5 4.2c0-.94.76-1.7 1.7-1.7h2.5c.4 0 .8.15 1.1.42L8.3 4.3h4.5c.94 0 1.7.76 1.7 1.7v5.8c0 .94-.76 1.7-1.7 1.7H3.2c-.94 0-1.7-.76-1.7-1.7z" stroke="#c3c5c7" stroke-width="1.2" fill="#43454a"/></svg></div>
<div class="tl" style="left:136px;top:824px;">test</div>
<div class="ti" style="left:99px;top:846.5px"><span style="display:block;width:18px;height:16px;font:italic 19px/12px 'Liberation Sans',sans-serif;color:#548af7;position:relative;left:0;top:.7px;-webkit-text-stroke:.2px">m</span></div>
<div class="tl" style="left:118px;top:844px;letter-spacing:0.020px;">pom.xml</div>
<div class="ti" style="left:60px;top:866px"><svg width="16" height="16" viewBox="0 0 16 16" style="" fill="none"><path d="M6.400 4.200l3.900 3.900-3.900 3.900" stroke="#c3c5c7" stroke-width="1.25" stroke-linecap="round" stroke-linejoin="round"/></svg></div>
<div class="ti" style="left:81px;top:866.5px"><svg width="16" height="16" viewBox="0 0 16 16" style="" fill="none"><path d="M1.5 4.2c0-.94.76-1.7 1.7-1.7h2.5c.4 0 .8.15 1.1.42L8.3 4.3h4.5c.94 0 1.7.76 1.7 1.7v2.2M8 13.5H3.2c-.94 0-1.7-.76-1.7-1.7V4.2" stroke="#c3c5c7" stroke-width="1.1" fill="none"/><rect x="9.6" y="9.6" width="5.8" height="5.8" rx="1.4" stroke="#548af7" stroke-width="1.2" fill="#25324d"/></svg></div>
<div class="tl" style="left:100px;top:864px;font-weight:bold;">yudao-server</div>
<div class="ti" style="left:60px;top:886px"><svg width="16" height="16" viewBox="0 0 16 16" style="" fill="none"><path d="M6.400 4.200l3.900 3.900-3.900 3.900" stroke="#c3c5c7" stroke-width="1.25" stroke-linecap="round" stroke-linejoin="round"/></svg></div>
<div class="ti" style="left:81px;top:886.5px"><svg width="16" height="16" viewBox="0 0 16 16" style="" fill="none"><path d="M1.5 4.2c0-.94.76-1.7 1.7-1.7h2.5c.4 0 .8.15 1.1.42L8.3 4.3h4.5c.94 0 1.7.76 1.7 1.7v5.8c0 .94-.76 1.7-1.7 1.7H3.2c-.94 0-1.7-.76-1.7-1.7z" stroke="#c3c5c7" stroke-width="1.2" fill="#43454a"/></svg></div>
<div class="tl" style="left:100px;top:884px;">yudao-ui</div>
<div class="ti" style="left:81px;top:906.5px"><svg width="16" height="16" viewBox="0 0 16 16" style="" fill="none"><circle cx="8" cy="8" r="6.7" stroke="#c3c5c7" stroke-width="1.1"/><path d="M12.7 3.300L3.300 12.700" stroke="#c3c5c7" stroke-width="1.1"/></svg></div>
<div class="tl" style="left:100px;top:904px;">.gitignore</div>
<div class="ti" style="left:81px;top:926.5px"><svg width="16" height="16" viewBox="0 0 16 16" style="" fill="none"><path d="M2 3.500h12M2 6.500h8M2 9.500h12M2 12.500h8" stroke="#c3c5c7" stroke-width="1"/></svg></div>
<div class="tl" style="left:100px;top:924px;letter-spacing:-0.740px;">LICENSE</div>
<div class="ti" style="left:81px;top:946.5px"><svg width="16" height="16" viewBox="0 0 16 16" style="" fill="none"><path d="M5.300 2.800C3 4.500 2 7.500 3.200 10.500c.8 2 2.600 2.800 3.800 2.300C8 12.300 8 10.500 7.700 8.500 7.400 6.500 6.800 4.500 5.300 2.800z" fill="#e0506a"/><path d="M5.300 3c.5-1 1.200-1.600 2.200-1.900" stroke="#57965c" stroke-width="1.200" fill="none"/><circle cx="11.300" cy="11.300" r="3.600" fill="#3c3f41"/><circle cx="11.300" cy="11.300" r="2.700" stroke="#c3c5c7" stroke-width="1.300" stroke-dasharray="1.400 0.720"/><circle cx="11.300" cy="11.300" r="0.900" stroke="#c3c5c7" stroke-width=".8"/></svg></div>
<div class="tl" style="left:100px;top:944px;">lombok.config</div>
<div class="ti" style="left:81px;top:966.5px"><span style="display:block;width:18px;height:16px;font:italic 19px/12px 'Liberation Sans',sans-serif;color:#548af7;position:relative;left:0;top:.7px;-webkit-text-stroke:.2px">m</span></div>
<div class="tl" style="left:100px;top:964px;color:#689fd6;letter-spacing:0.020px;">pom.xml</div>
<div style="left:504px;top:3px;width:2px;height:981px;background:#36383b"></div>
<div style="left:506px;top:3px;width:1178px;height:42px;background:#3c3f41"></div>
<div style="left:506px;top:3px;width:170px;height:38.5px;background:#4e5254"></div>
<div style="left:506px;top:41.5px;width:170px;height:3.5px;background:#747a80;border-radius:0 0 1px 1px"></div>
<div class="ti" style="left:518px;top:16px"><svg width="16" height="16" viewBox="0 0 16 16" style="" fill="none"><circle cx="8" cy="8" r="6.4" stroke="#57965c" stroke-width="1.3" fill="#253627"/><text x="8" y="11.3" font-family="Liberation Serif,serif" font-size="9.5" font-weight="bold" text-anchor="middle" fill="#57965c">I</text></svg></div>
<div class="tab" style="left:539px;top:14px;height:22px;line-height:22px">SmsCodeApi.java</div>
<div class="ti" style="left:652px;top:16px"><svg width="16" height="16" viewBox="0 0 16 16"><path d="M4.500 4.500l7 7M11.500 4.500l-7 7" stroke="#7f8385" stroke-width="1"/></svg></div>
<div style="left:1664.5px;top:18px;width:2px;height:2px;background:#c4c6c8;border-radius:1px"></div>
<div style="left:1664.5px;top:23px;width:2px;height:2px;background:#c4c6c8;border-radius:1px"></div>
<div style="left:1664.5px;top:28px;width:2px;height:2px;background:#c4c6c8;border-radius:1px"></div>
<div class="ed" id="e1" style="left:506px;top:45px;width:1178px;height:489px">
<div style="left:0;top:110px;width:1178px;height:21.5px;background:#323232"></div>
<div style="left:81px;top:0;width:1px;height:489px;background:#313335"></div>
<div style="left:1019px;top:0;width:1px;height:489px;background:#3e3e3e"></div>
<div class="ln" style="top:1px;width:21.5px">10</div>
<div class="cl" style="top:1px;left:84px"><span class="d">/<span class="as">*</span><span class="as">*</span></span></div>
<div class="ln" style="top:23px;width:21.5px">11</div>
<div class="cl" style="top:23px;left:84px"><span class="d"> <span class="as">*</span> <span class="cj">短信验证码</span> <i>API</i> <span class="cj">接口</span></span></div>
<div class="ln" style="top:45px;width:21.5px">12</div>
<div class="cl" style="top:45px;left:84px"><span class="d"> <span class="as">*</span></span></div>
<div class="ln" style="top:67px;width:21.5px">13</div>
<div class="cl" style="top:67px;left:84px"><span class="d"> <span class="as">*</span> </span><span class="dt">@author</span><span class="d"> <span class="cj">芋道源码</span></span></div>
<div class="ln" style="top:89px;width:21.5px">14</div>
<div class="cl" style="top:89px;left:84px"><span class="d"> <span class="as">*</span>/</span></div>
<div class="ln cur" style="top:111px;width:21.5px">15</div>
<div class="cl" style="top:111px;left:84px"><span class="k">public interface</span> <span class="hl">SmsCodeApi</span> {</div>
<div class="ln" style="top:133px;width:21.5px">16</div>
<div class="ln" style="top:155px;width:21.5px">17</div>
<div class="cl" style="top:155px;left:84px">    <span class="d">/<span class="as">*</span><span class="as">*</span></span></div>
<div class="ln" style="top:177px;width:21.5px">18</div>
<div class="cl" style="top:177px;left:84px">    <span class="d"> <span class="as">*</span> <span class="cj">创建短信验证码，并进行发送</span></span></div>
<div class="ln" style="top:199px;width:21.5px">19</div>
<div class="cl" style="top:199px;left:84px">    <span class="d"> <span class="as">*</span></span></div>
<div class="ln" style="top:221px;width:21.5px">20</div>
<div class="cl" style="top:221px;left:84px">    <span class="d"> <span class="as">*</span> </span><span class="dt">@param</span> <span class="dp">reqDTO</span><span class="d"> <span class="cj">发送请求</span></span></div>
<div class="ln" style="top:243px;width:21.5px">21</div>
<div class="cl" style="top:243px;left:84px">    <span class="d"> <span class="as">*</span>/</span></div>
<div class="ln" style="top:265px;width:21.5px">22</div>
<div class="cl" style="top:265px;left:84px">    <span class="k">void</span> <span class="f">sendSmsCode</span>(<span class="a">@Valid</span> SmsCodeSendReqDTO reqDTO)<span class="k">;</span></div>
<div class="ln" style="top:287px;width:21.5px">23</div>
<div class="ln" style="top:309px;width:21.5px">24</div>
<div class="cl" style="top:309px;left:84px">    <span class="d">/<span class="as">*</span><span class="as">*</span></span></div>
<div class="ln" style="top:331px;width:21.5px">25</div>
<div class="cl" style="top:331px;left:84px">    <span class="d"> <span class="as">*</span> <span class="cj">验证短信验证码，并进行使用</span></span></div>
<div class="ln" style="top:353px;width:21.5px">26</div>
<div class="cl" style="top:353px;left:84px">    <span class="d"> <span class="as">*</span> <span class="cj">如果正确，则将验证码标记成已使用</span></span></div>
<div class="ln" style="top:375px;width:21.5px">27</div>
<div class="cl" style="top:375px;left:84px">    <span class="d"> <span class="as">*</span> <span class="cj">如果错误，则抛出</span> <i>{</i></span><span class="dt">@link</span> <span class="di">ServiceException</span><span class="d"><i>}</i> <span class="cj">异常</span></span></div>
<div class="ln" style="top:397px;width:21.5px">28</div>
<div class="cl" style="top:397px;left:84px">    <span class="d"> <span class="as">*</span></span></div>
<div class="ln" style="top:419px;width:21.5px">29</div>
<div class="cl" style="top:419px;left:84px">    <span class="d"> <span class="as">*</span> </span><span class="dt">@param</span> <span class="dp">reqDTO</span><span class="d"> <span class="cj">使用请求</span></span></div>
<div class="ln" style="top:441px;width:21.5px">30</div>
<div class="cl" style="top:441px;left:84px">    <span class="d"> <span class="as">*</span>/</span></div>
<div class="ln" style="top:463px;width:21.5px">31</div>
<div class="cl" style="top:463px;left:84px">    <span class="k">void</span> <span class="f">useSmsCode</span>(<span class="a">@Valid</span> SmsCodeUseReqDTO reqDTO)<span class="k">;</span></div>
<div class="ti" style="left:27px;top:111px;width:16px;height:16px"><svg width="16" height="16" viewBox="0 0 16 16" fill="none"><circle cx="8" cy="8" r="6.600" fill="#253627" stroke="#57965c" stroke-width="1.100"/><path d="M3.400 3.400l9.200 9.200" stroke="#57965c" stroke-width="1.100"/><path d="M16 12v4h-4z" fill="#dfe1e5"/></svg></div>
<div class="ti" style="left:45px;top:113px;width:16px;height:16px"><svg width="16" height="16" viewBox="0 0 16 16" fill="none"><circle cx="6.500" cy="7" r="5.400" fill="#253627" stroke="#57965c" stroke-width="1.100"/><path d="M6.500 4v6M5.300 4h2.400M5.300 10h2.400" stroke="#57965c" stroke-width="1.100"/><path d="M13.300 6v8.700M10.900 12.300l2.400 2.400 2.400-2.400" stroke="#dfe1e5" stroke-width="1.100" stroke-linecap="round" stroke-linejoin="round"/></svg></div>
<div class="ti" style="left:45px;top:267px;width:16px;height:16px"><svg width="16" height="16" viewBox="0 0 16 16" fill="none"><circle cx="6.500" cy="7" r="5.400" fill="#253627" stroke="#57965c" stroke-width="1.100"/><path d="M6.500 4v6M5.300 4h2.400M5.300 10h2.400" stroke="#57965c" stroke-width="1.100"/><path d="M13.300 6v8.700M10.900 12.300l2.400 2.400 2.400-2.400" stroke="#dfe1e5" stroke-width="1.100" stroke-linecap="round" stroke-linejoin="round"/></svg></div>
<div class="ti" style="left:45px;top:465px;width:16px;height:16px"><svg width="16" height="16" viewBox="0 0 16 16" fill="none"><circle cx="6.500" cy="7" r="5.400" fill="#253627" stroke="#57965c" stroke-width="1.100"/><path d="M6.500 4v6M5.300 4h2.400M5.300 10h2.400" stroke="#57965c" stroke-width="1.100"/><path d="M13.300 6v8.700M10.900 12.300l2.400 2.400 2.400-2.400" stroke="#dfe1e5" stroke-width="1.100" stroke-linecap="round" stroke-linejoin="round"/></svg></div>
<div class="ti" style="left:45px;top:311px;width:16px;height:16px"><svg width="16" height="16" viewBox="0 0 16 16" fill="none"><path d="M2.500 2.500v11M5 4h9M5 7h6M5 10h9M5 13h6" stroke="#afb1b3" stroke-width="1.100"/></svg></div>
<div class="ti" style="left:1157px;top:5px"><svg width="16" height="16" viewBox="0 0 16 16"><path d="M3 8.500l3.500 3.500L13.500 4.500" stroke="#5fad65" stroke-width="1.800" fill="none"/></svg></div>
<div style="left:1168px;top:72px;width:7px;height:246px;background:#424446;border-radius:3.500px"></div>
<div style="left:1164px;top:127px;width:14px;height:1px;background:#c4617f"></div>
</div>
<div style="left:506px;top:533.5px;width:1178px;height:41.5px;background:#3c3f41"></div>
<div style="left:506px;top:533.5px;width:196px;height:38.200000000000045px;background:#4e5254"></div>
<div style="left:506px;top:571.7px;width:196px;height:3.5px;background:#4a88c7;border-radius:0 0 1px 1px"></div>
<div class="ti" style="left:518px;top:546px"><svg width="16" height="16" viewBox="0 0 16 16" style="" fill="none"><circle cx="8" cy="8" r="6.4" stroke="#4f84ea" stroke-width="1.4" fill="#25324d"/><text x="8" y="11.3" font-family="Liberation Sans,sans-serif" font-size="9.5" font-weight="bold" text-anchor="middle" fill="#4f84ea">C</text></svg></div>
<div class="tab" style="left:539px;top:544px;height:22px;line-height:22px">SmsCodeApiImpl.java</div>
<div class="ti" style="left:678px;top:546px"><svg width="16" height="16" viewBox="0 0 16 16"><path d="M4.500 4.500l7 7M11.500 4.500l-7 7" stroke="#7f8385" stroke-width="1"/></svg></div>
<div style="left:1664.5px;top:548px;width:2px;height:2px;background:#c4c6c8;border-radius:1px"></div>
<div style="left:1664.5px;top:553px;width:2px;height:2px;background:#c4c6c8;border-radius:1px"></div>
<div style="left:1664.5px;top:558px;width:2px;height:2px;background:#c4c6c8;border-radius:1px"></div>
<div class="ed" id="e2" style="left:506px;top:575px;width:1178px;height:409px">
<div style="left:0;top:242px;width:1178px;height:21.5px;background:#323232"></div>
<div style="left:64px;top:0;width:1px;height:409px;background:#313335"></div>
<div style="left:1002px;top:0;width:1px;height:409px;background:#3e3e3e"></div>
<div class="ln" style="top:1px;width:21.5px">1</div>
<div class="cl" style="top:1px;left:67px"><span class="k">package</span> cn.iocoder.yudao.module.system.api.sms<span class="k">;</span></div>
<div class="ln" style="top:23px;width:21.5px">2</div>
<div class="ln" style="top:45px;width:21.5px">3</div>
<div class="cl" style="top:45px;left:67px"><span class="k">import</span> <span class="fold">...</span></div>
<div class="ln" style="top:67px;width:21.5px">11</div>
<div class="ln" style="top:89px;width:21.5px">12</div>
<div class="cl" style="top:89px;left:67px"><span class="d">/<span class="as">*</span><span class="as">*</span></span></div>
<div class="ln" style="top:111px;width:21.5px">13</div>
<div class="cl" style="top:111px;left:67px"><span class="d"> <span class="as">*</span> <span class="cj">短信验证码</span> <i>API</i> <span class="cj">实现类</span></span></div>
<div class="ln" style="top:133px;width:21.5px">14</div>
<div class="cl" style="top:133px;left:67px"><span class="d"> <span class="as">*</span></span></div>
<div class="ln" style="top:155px;width:21.5px">15</div>
<div class="cl" style="top:155px;left:67px"><span class="d"> <span class="as">*</span> </span><span class="dt">@author</span><span class="d"> <span class="cj">芋道源码</span></span></div>
<div class="ln" style="top:177px;width:21.5px">16</div>
<div class="cl" style="top:177px;left:67px"><span class="d"> <span class="as">*</span>/</span></div>
<div class="ln" style="top:199px;width:21.5px">17</div>
<div class="cl" style="top:199px;left:67px"><span class="a">@Service</span></div>
<div class="ln" style="top:221px;width:21.5px">18</div>
<div class="cl" style="top:221px;left:67px"><span class="a">@Validated</span></div>
<div class="ln cur" style="top:243px;width:21.5px">19</div>
<div class="cl" style="top:243px;left:67px"><span class="k">public class</span> <span class="hl">SmsCodeApiImpl</span> <span class="k">implements</span> SmsCodeApi {</div>
<div class="ln" style="top:265px;width:21.5px">20</div>
<div class="ln" style="top:287px;width:21.5px">21</div>
<div class="cl" style="top:287px;left:67px">    <span class="a">@Resource</span></div>
<div class="ln" style="top:309px;width:21.5px">22</div>
<div class="cl" style="top:309px;left:67px">    <span class="k">private</span> SmsCodeService <span class="v">smsCodeService</span><span class="k">;</span></div>
<div class="ln" style="top:331px;width:21.5px">23</div>
<div class="ln" style="top:353px;width:21.5px">24</div>
<div class="cl" style="top:353px;left:67px">    <span class="a">@Override</span></div>
<div class="ln" style="top:375px;width:21.5px">25</div>
<div class="cl" style="top:375px;left:67px">    <span class="k">public void</span> <span class="f">sendSmsCode</span>(SmsCodeSendReqDTO reqDTO)<span class="fold"> { </span><span class="v">smsCodeService</span>.sendSmsCode(reqDTO)<span class="k">;</span><span class="fold"> }</span></div>
<div class="ln" style="top:397px;width:21.5px">28</div>
<div class="ti" style="left:27px;top:244px;width:16px;height:16px"><svg width="16" height="16" viewBox="0 0 16 16" fill="none"><circle cx="8" cy="8" r="6.600" fill="#253627" stroke="#57965c" stroke-width="1.100"/><path d="M3.400 3.400l9.200 9.200" stroke="#57965c" stroke-width="1.100"/><path d="M16 12v4h-4z" fill="#dfe1e5"/></svg></div>
<div class="ti" style="left:27px;top:310px;width:16px;height:16px"><svg width="16" height="16" viewBox="0 0 16 16" fill="none"><circle cx="8" cy="8" r="6.600" fill="#253627" stroke="#57965c" stroke-width="1.100"/><path d="M3.400 3.400l9.200 9.200" stroke="#57965c" stroke-width="1.100"/><path d="M9 12.500h6.500M13.500 10.500l2 2-2 2" stroke="#dfe1e5" stroke-width="1.200"/></svg></div>
<div class="ti" style="left:27px;top:376px;width:16px;height:16px"><svg width="16" height="16" viewBox="0 0 16 16" fill="none"><circle cx="6.500" cy="8" r="5.400" fill="#253627" stroke="#57965c" stroke-width="1.100"/><path d="M6.500 5v6M5.300 5h2.400M5.300 11h2.400" stroke="#57965c" stroke-width="1.100"/><path d="M13 9V2.500M11 4.500l2-2 2 2" stroke="#db5c5c" stroke-width="1.200"/></svg></div>
<div class="ti" style="left:44px;top:377px;width:16px;height:16px"><svg width="16" height="16" viewBox="0 0 16 16" fill="none"><path d="M6 4l4 4-4 4" stroke="#868a91" stroke-width="1.100"/></svg></div>
<div class="ti" style="left:44px;top:47px;width:16px;height:16px"><svg width="16" height="16" viewBox="0 0 16 16" fill="none"><path d="M6 4l4 4-4 4" stroke="#868a91" stroke-width="1.100"/></svg></div>
<div class="ti" style="left:73px;top:376px;width:16px;height:16px"><svg width="16" height="16" viewBox="0 0 16 16" fill="none"><path d="M8 1.500c-2.500 0-4.300 1.900-4.300 4.200 0 1.500.8 2.700 1.800 3.500v1.600h5V9.200c1-.8 1.800-2 1.800-3.500C12.300 3.400 10.500 1.500 8 1.500z" fill="#f2c55c"/><path d="M6 12.500h4M6.500 14.300h3" stroke="#c9a44c" stroke-width="1.200"/></svg></div>
<div class="ti" style="left:1157px;top:5px"><svg width="16" height="16" viewBox="0 0 16 16"><path d="M3 8.500l3.500 3.500L13.500 4.500" stroke="#5fad65" stroke-width="1.800" fill="none"/></svg></div>
<div style="left:1168px;top:28px;width:7px;height:216px;background:#424446;border-radius:3.500px"></div>
<div style="left:1164px;top:157px;width:14px;height:1px;background:#c4617f"></div>
<div style="left:168px;top:244px;width:2px;height:18px;background:#dddddd"></div>
</div>
<div style="left:1684px;top:3px;width:2px;height:981px;background:#323436"></div>
<div style="left:1686px;top:3px;width:18px;height:981px;background:#3c3f41;overflow:hidden">
<div style="left:10px;top:10px;width:20px;height:20px;line-height:0"><svg width="20" height="20" viewBox="0 0 20 20" fill="none" stroke="#d3d5d9" stroke-width="1.700" stroke-linecap="round" stroke-linejoin="round"><path d="M4 14.500l1.500-3V8.500c0-3 2-5 4.500-5s4.500 2 4.500 5v3l1.500 3z"/></svg></div>
<div style="left:10px;top:50px;width:20px;height:20px;line-height:0"><svg width="20" height="20" viewBox="0 0 20 20" fill="none" stroke="#d3d5d9" stroke-width="1.700" stroke-linecap="round" stroke-linejoin="round"><ellipse cx="10" cy="5" rx="7" ry="2.500"/><path d="M3 5v10c0 1.400 3.100 2.500 7 2.500s7-1.100 7-2.500V5M3 8.300c0 1.400 3.100 2.500 7 2.500M3 11.600c0 1.400 3.100 2.500 7 2.500"/></svg></div>
<div style="left:10px;top:85px;font:italic 27px/28px 'Liberation Sans',sans-serif;color:#d3d5d9">m</div>
<div style="left:10px;top:130px;width:20px;height:20px;line-height:0"><svg width="20" height="20" viewBox="0 0 20 20" fill="none" stroke="#d3d5d9" stroke-width="1.700" stroke-linecap="round" stroke-linejoin="round"><path d="M6.500 4.200c2.500 0 4 1.200 4 3 0 2-1.500 3-4 3s-4-1-4-3c0-1.800 1.500-3 4-3zM3 9c-1 1-1.500 2.300-1.500 4 0 2 2.500 4 8.500 4"/></svg></div>
<div style="left:10px;top:170px;width:20px;height:20px;line-height:0"><svg width="20" height="20" viewBox="0 0 20 20" fill="none" stroke="#d3d5d9" stroke-width="1.700" stroke-linecap="round" stroke-linejoin="round"><path d="M6.500 4.200c2.500 0 4 1.200 4 3 0 2-1.500 3-4 3s-4-1-4-3c0-1.800 1.500-3 4-3zM3 9c-1 1-1.500 2.300-1.500 4 0 2 2.500 4 8.500 4"/></svg></div>
<div style="left:11px;top:213px;width:10px;height:17px;background:#dfe1e5"></div>
</div>
<div style="left:1703px;top:0;width:1px;height:984px;background:#9a9c9e;opacity:.6"></div>
<div style="left:0;top:2.7px;width:1704px;height:1.1px;background:#2c2e30"></div>
<svg width="1704" height="984" viewBox="0 0 1704 984" style="position:absolute;left:0;top:0;pointer-events:none">
<rect x="143.00" y="142.40" width="309.50" height="463.90" stroke="#ff3c7e" stroke-width="3.4" fill="none"/>
<rect x="175.50" y="323.00" width="252.10" height="101.80" stroke="#ff3c7e" stroke-width="3.4" fill="none"/>
<rect x="173.50" y="444.00" width="254.80" height="41.80" stroke="#ff3c7e" stroke-width="3.4" fill="none"/>
<path d="M778.400 177.500L802.300 216.300L788 211.300L781.400 320L774.100 500L760.700 794.500A4.400 4.400 0 0 1 751.900 795L760.200 500L767 209.600L751.500 214.200Z" fill="#ff3c7e"/>
</svg>
</div></body></html>
